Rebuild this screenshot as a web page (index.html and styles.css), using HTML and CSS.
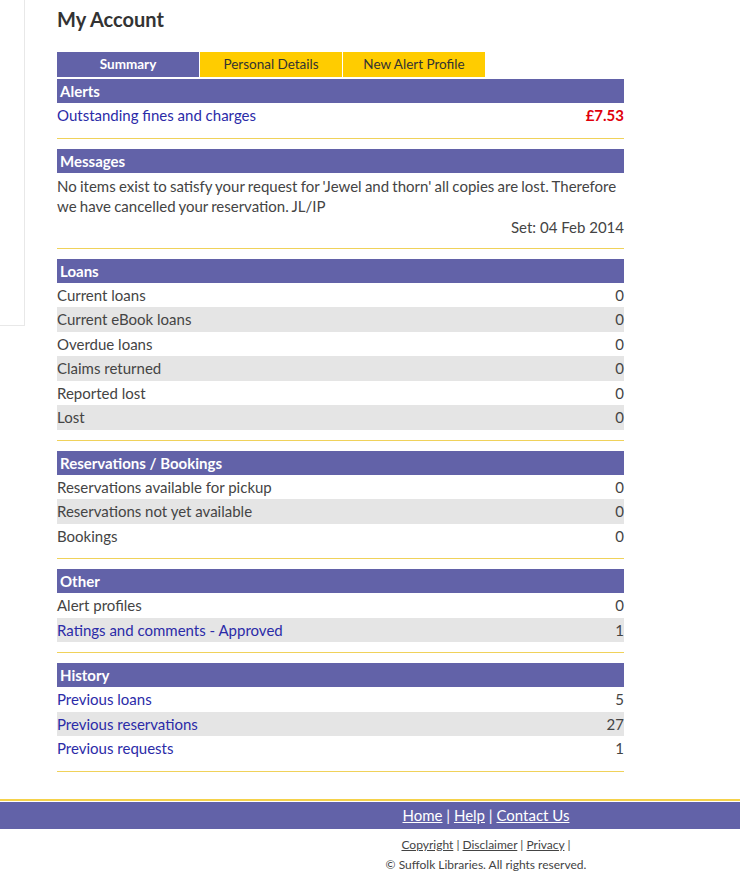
FILE: index.html
```html
<!DOCTYPE html>
<html lang="en">
<head>
<meta charset="utf-8">
<title>My Account</title>
<link rel="stylesheet" href="styles.css">
</head>
<body>
<div class="page">
  <aside class="sidebar"></aside>
  <main class="main">
    <h1 class="title">My Account</h1>
    <nav class="tabs">
      <a class="tab tab-active">Summary</a>
      <a class="tab">Personal Details</a>
      <a class="tab">New Alert Profile</a>
    </nav>

    <section class="section">
      <h2 class="section-head">Alerts</h2>
      <div class="row"><a class="link" href="#">Outstanding fines and charges</a><span class="fine">£7.53</span></div>
    </section>

    <section class="section">
      <h2 class="section-head">Messages</h2>
      <p class="message">No items exist to satisfy your request for 'Jewel and thorn' all copies are lost. Therefore we have cancelled your reservation. JL/IP</p>
      <p class="message-date">Set: 04 Feb 2014</p>
    </section>

    <section class="section">
      <h2 class="section-head">Loans</h2>
      <div class="row"><span>Current loans</span><span>0</span></div>
      <div class="row alt"><span>Current eBook loans</span><span>0</span></div>
      <div class="row"><span>Overdue loans</span><span>0</span></div>
      <div class="row alt"><span>Claims returned</span><span>0</span></div>
      <div class="row"><span>Reported lost</span><span>0</span></div>
      <div class="row alt"><span>Lost</span><span>0</span></div>
    </section>

    <section class="section">
      <h2 class="section-head">Reservations / Bookings</h2>
      <div class="row"><span>Reservations available for pickup</span><span>0</span></div>
      <div class="row alt"><span>Reservations not yet available</span><span>0</span></div>
      <div class="row"><span>Bookings</span><span>0</span></div>
    </section>

    <section class="section">
      <h2 class="section-head">Other</h2>
      <div class="row"><span>Alert profiles</span><span>0</span></div>
      <div class="row alt"><a class="link" href="#">Ratings and comments - Approved</a><span>1</span></div>
    </section>

    <section class="section">
      <h2 class="section-head">History</h2>
      <div class="row"><a class="link" href="#">Previous loans</a><span>5</span></div>
      <div class="row alt"><a class="link" href="#">Previous reservations</a><span>27</span></div>
      <div class="row"><a class="link" href="#">Previous requests</a><span>1</span></div>
    </section>
  </main>
</div>

<footer class="footer">
  <div class="footer-bar">
    <div class="footer-links"><a href="#">Home</a> | <a href="#">Help</a> | <a href="#">Contact Us</a></div>
  </div>
  <div class="footer-small">
    <div><a href="#">Copyright</a> | <a href="#">Disclaimer</a> | <a href="#">Privacy</a> |</div>
    <div>© Suffolk Libraries. All rights reserved.</div>
  </div>
</footer>
</body>
</html>
```

FILE: styles.css
```css
* { box-sizing: border-box; }

html, body {
  margin: 0;
  padding: 0;
  background: #fff;
}

body {
  font-family: Lato, "Open Sans", "Liberation Sans", sans-serif;
  font-size: 15px;
  color: #444;
}

.page {
  display: flex;
  align-items: flex-start;
}

.sidebar {
  width: 25px;
  height: 326px;
  border-right: 1px solid #e8e8e8;
  border-bottom: 1px solid #e8e8e8;
  flex: none;
}

.main {
  width: 567px;
  margin-left: 32px;
  padding-top: 7px;
}

.title {
  margin: 0;
  font-size: 20px;
  line-height: 24px;
  font-weight: 700;
  color: #333;
}

.tabs {
  display: flex;
  gap: 1px;
  margin-top: 21px;
  margin-bottom: 2px;
}

.tab {
  width: 142px;
  height: 25px;
  line-height: 25px;
  text-align: center;
  font-size: 13.5px;
  background: #ffcc00;
  color: #333;
}

.tab-active {
  background: #6262a8;
  color: #fff;
  font-weight: 700;
}

.section {
  padding-bottom: 10px;
  border-bottom: 1px solid #f0d25a;
  margin-bottom: 10px;
}

.section-head {
  margin: 0;
  height: 24px;
  line-height: 24px;
  padding-left: 3px;
  background: #6262a8;
  color: #fff;
  font-size: 15px;
  font-weight: 700;
}

.row {
  display: flex;
  justify-content: space-between;
  line-height: 24.5px;
  height: 24.5px;
}

.row.alt {
  background: #e5e5e5;
}

.link {
  color: #2b2ba8;
  text-decoration: none;
}

.fine {
  color: #e0000b;
  font-weight: 700;
}

.message {
  margin: 0;
  padding-top: 3px;
  line-height: 20px;
  word-spacing: -0.6px;
}

.message-date {
  margin: 0;
  text-align: right;
  line-height: 22px;
}

.footer {
  margin-top: 17px;
}

.footer-bar {
  border-top: 2px solid #f5d24a;
  padding-top: 1px;
}

.footer-links {
  background: #6262a8;
  color: #fff;
  height: 27px;
  line-height: 27px;
  text-align: center;
  padding-left: 232px;
  font-size: 15px;
}

.footer-links a {
  color: #fff;
  text-decoration: underline;
}

.footer-small {
  padding-left: 232px;
  text-align: center;
  font-size: 12px;
  line-height: 20px;
  color: #444;
  padding-top: 6px;
}

.footer-small a {
  color: #444;
  text-decoration: underline;
}
```
